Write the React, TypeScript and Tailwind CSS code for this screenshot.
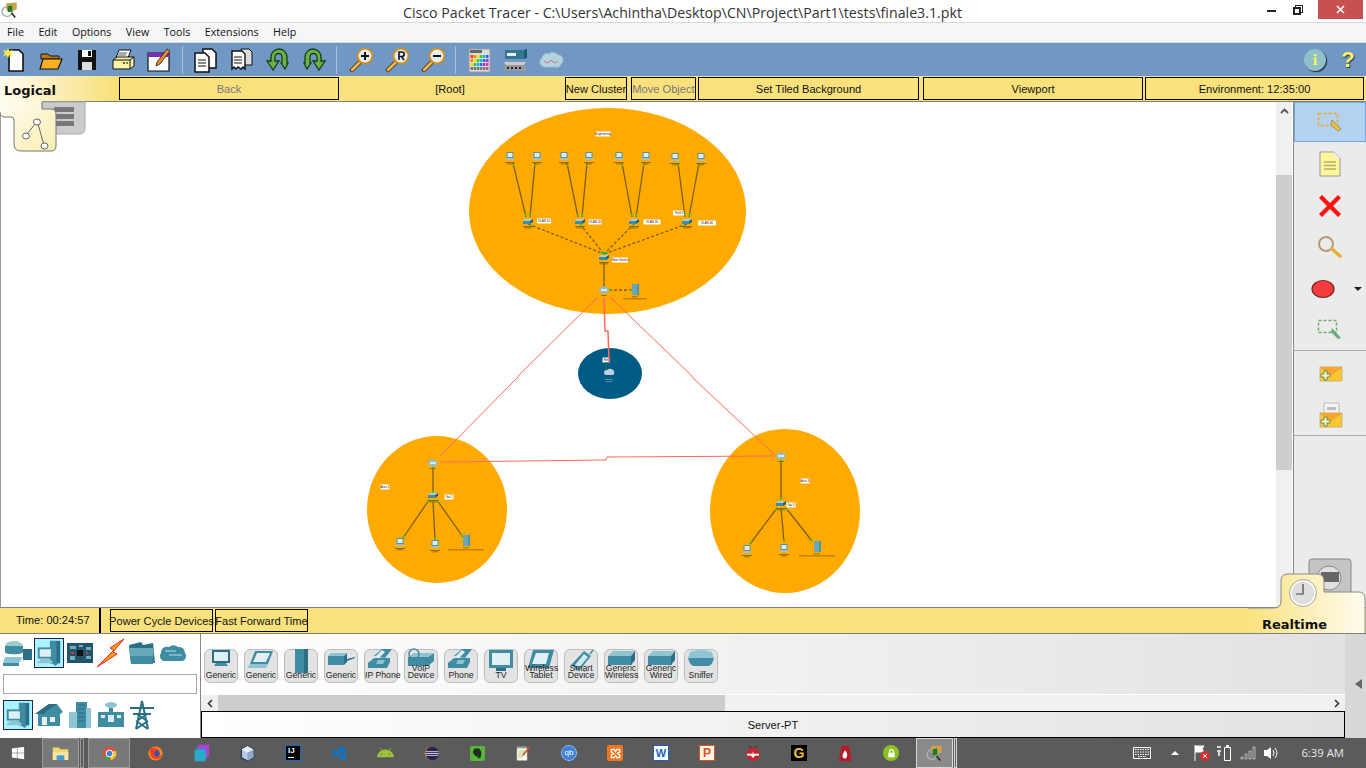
import type { ReactNode } from "react";
import { FaAndroid, FaWindows } from "react-icons/fa";
import { VscVscode } from "react-icons/vsc";

const teal = "#3f8ca3";
const tealDark = "#2a6f85";
const tealLight = "#8fc4d2";

function Ico({ size = 26, children }: { size?: number; children: ReactNode }) {
  return (
    <svg width={size} height={size} viewBox="0 0 26 26">
      {children}
    </svg>
  );
}

const toolbarIcons: ReactNode[] = [
  <Ico key="new">
    <path d="M7 3h10l4 4v17H7z" fill="#fff" stroke="#111" strokeWidth="1.600" />
    <path d="M6 1l1.500 3L11 3 9 6l2 3-3.500-1L6 11 4.500 8 1 9l2-3-2-3 3.500 1z" fill="#ffe94a" />
  </Ico>,
  <Ico key="open">
    <path d="M3 7h7l2 2h9v3H3z" fill="#b97a10" stroke="#111" />
    <path d="M5 12h19l-4 10H2z" fill="#fdb01e" stroke="#111" strokeWidth="1.200" />
  </Ico>,
  <Ico key="save">
    <path d="M4 3h18v20H4z" fill="#111" />
    <path d="M8 3h10v7H8z" fill="#fff" />
    <path d="M8 15h10v8H8z" fill="#ddd" />
    <path d="M14 4h3v5h-3z" fill="#111" />
  </Ico>,
  <Ico key="print">
    <path d="M9 3h12l-3 8H6z" fill="#fff" stroke="#111" />
    <path d="M9 6h8M8 8h8" stroke="#555" />
    <path d="M3 13l4-3h17v9l-4 3H3z" fill="#f8f5a8" stroke="#111" />
    <path d="M3 13h17v9M20 13l4-3" fill="none" stroke="#111" />
    <path d="M13 15h2v2h-2z" fill="#c33" />
    <path d="M16 15h2v2h-2z" fill="#3a3" />
  </Ico>,
  <Ico key="wizard">
    <path d="M2 6h21v18H2z" fill="#fff" stroke="#111" strokeWidth="1.200" />
    <path d="M2 6h21v4H2z" fill="#7a2fb8" />
    <path d="M21 2l3 2-10 13-4 2 1-4z" fill="#e8872b" stroke="#222" strokeWidth=".8" />
  </Ico>,
];

const toolbarIcons2: ReactNode[] = [
  <Ico key="copy">
    <path d="M11 2h9l4 4v15H11z" fill="#fff" stroke="#111" strokeWidth="1.500" />
    <path d="M3 6h10l4 4v15H3z" fill="#fff" stroke="#111" strokeWidth="1.500" />
    <path d="M6 13h8M6 16h8M6 19h8" stroke="#111" />
  </Ico>,
  <Ico key="paste">
    <path d="M13 2h8l3 3v13H13z" fill="#ddd" stroke="#111" />
    <path d="M4 4h10l3 3v15l-2-2-2 2-3-2-2 2-2-2-2 2z" fill="#fff" stroke="#111" strokeWidth="1.400" />
    <path d="M6 10h8M6 13h8M6 16h8" stroke="#111" />
  </Ico>,
  <Ico key="undo">
    <path d="M7 24l-6-9h4V11a8 8 0 0 1 16 0v6h1l-3 6-4-6h1v-6a3.500 3.500 0 0 0-7 0v4h4z" transform="translate(2 -1)" fill="#6fae4b" stroke="#13400f" strokeWidth="1.300" />
  </Ico>,
  <Ico key="redo">
    <path d="M19 24l6-9h-4V11a8 8 0 0 0-16 0v6H4l3 6 4-6h-1v-6a3.500 3.500 0 0 1 7 0v4h-4z" transform="translate(0 -1)" fill="#6fae4b" stroke="#13400f" strokeWidth="1.300" />
  </Ico>,
];

function Magnifier({ glyph }: { glyph: string }) {
  return (
    <Ico>
      <g transform="translate(2 0)">
        <path d="M11 15L3 23" stroke="#4e3a10" strokeWidth="4.500" strokeLinecap="round" />
        <path d="M11 15L3 23" stroke="#f2b84b" strokeWidth="2.500" strokeLinecap="round" />
        <circle cx="16" cy="9" r="7.500" fill="#e7eef2" stroke="#c98f2a" strokeWidth="2" />
        {glyph === "+" && <path d="M12 9h8M16 5v8" stroke="#111" strokeWidth="2" />}
        {glyph === "-" && <path d="M12 9h8" stroke="#111" strokeWidth="2" />}
        {glyph === "R" && <path d="M14 13V5h3a2 2 0 0 1 0 4.500h-3M16.500 9.500L19 13" fill="none" stroke="#111" strokeWidth="1.600" />}
      </g>
    </Ico>
  );
}

const paletteColors = ["#e33", "#f80", "#fd0", "#3c3", "#0bd", "#36e", "#a3c", "#e3a"];

const toolbarIcons3: ReactNode[] = [
  <Ico key="palette">
    <path d="M3 2h21v23H3z" fill="#ddd" stroke="#999" />
    <path d="M4 3h12v3H4z" fill="#666" />
    {[8, 12, 16, 20].map((y, r) =>
      paletteColors.slice(0, 6).map((c, i) => (
        <path key={`${y}-${i}`} d={`M${4.5 + i * 3.1} ${y}h2.500v3h-2.500z`} fill={r === 3 ? "#777" : paletteColors[(i + r) % 8]} />
      )),
    )}
  </Ico>,
  <Ico key="device">
    <path d="M3 3h19v9H3z" fill="#30788f" />
    <path d="M22 3l3-1v9l-3 1z" fill="#1f5a6e" />
    <path d="M5 6h9v3H5z" fill="#e6f2f5" />
    <path d="M2 15h22l-2 3H4z" fill="#ccc" />
    <path d="M2 18h22v6H2z" fill="#999" />
    <path d="M5 20h2v2H5zM9 20h2v2H9zM13 20h2v2h-2zM17 20h2v2h-2z" fill="#222" />
  </Ico>,
  <Ico key="cloud">
    <path d="M6 20a5 5 0 0 1-2-9 5 5 0 0 1 7-4 6 6 0 0 1 9 1 5 5 0 0 1 3 9 5 5 0 0 1-6 3z" fill="#b4d3dc" stroke="#9cc0cb" />
    <path d="M6 14l4 2 3-3 4 3 3-2" fill="none" stroke="#cc6b8a" />
  </Ico>,
];

function ToolbarSep() {
  return <div className="mx-[5px] h-[28px] w-px bg-[#a9c0dc]" />;
}

function ToolSlot({ children }: { children: ReactNode }) {
  return <div className="flex w-[36px] shrink-0 items-center justify-center">{children}</div>;
}

function NavButton({ className, children }: { className: string; children: ReactNode }) {
  return (
    <div className={`flex h-[23px] items-center justify-center whitespace-nowrap border border-black pt-px text-[11.100px] ${className}`}>
      {children}
    </div>
  );
}

// diagram data, in page coordinates
const topPcs = [510, 537, 564, 589, 619, 646, 675, 701];
const topSwitches = [528, 580, 634, 687];
const redLines = [
  { p: "598,297 519,375 517,378 440,456", w: 1 },
  { p: "610,297 691,375 693,378 775,455", w: 1 },
  { p: "604,297 605,331 608,331 609,362", w: 1.5 },
  { p: "441,462 606,460 607,457 775,456", w: 1 },
];

function Pc({ x, y }: { x: number; y: number }) {
  return (
    <g transform={`translate(${x} ${y})`}>
      <path d="M-3.500-5h7v6h-7z" fill="#4f93a8" />
      <path d="M-2.500-4h5v4h-5z" fill="#dfeef2" />
      <path d="M-4 1.500h8l1 1.500h-10z" fill="#9cc5d1" />
      <path d="M-5 5h10v.7h-10zM-3 6.500h6v.7h-6z" fill="#7a5b00" />
    </g>
  );
}

function Sw({ x, y }: { x: number; y: number }) {
  return (
    <g transform={`translate(${x} ${y})`}>
      <path d="M-5-1l2-2h8l-2 2z" fill="#a8cfda" />
      <path d="M-5-1h7v3h-7z" fill="#3f8ca3" />
      <path d="M2-1l3-2v3l-3 2z" fill="#1f6278" />
      <path d="M-5 4h10v.7h-10zM-4 5.500h8v.7h-8z" fill="#7a5b00" />
    </g>
  );
}

function Router({ x, y }: { x: number; y: number }) {
  return (
    <g transform={`translate(${x} ${y})`}>
      <ellipse cx="0" cy="0" rx="5" ry="3.500" fill="#8dbccb" />
      <path d="M-3-1l6 2M3-1l-6 2" stroke="#fff" strokeWidth=".8" />
      <path d="M-3 5h6v.7h-6z" fill="#7a5b00" />
    </g>
  );
}

function Srv({ x, y, w = 14 }: { x: number; y: number; w?: number }) {
  return (
    <g transform={`translate(${x} ${y})`}>
      <path d="M-3-5h7v11h-7z" fill="#4f93a8" />
      <path d="M-3-5h5v11h-5z" fill="#6aa7ba" />
      <path d="M-3 7.500h6v.7h-6z" fill="#7a5b00" />
      <path d={`M${-w}  9.500h${w * 2}v.7h${-w * 2}z`} fill="#7a5b00" />
    </g>
  );
}

function Lbl({ x, y, t, w = 12 }: { x: number; y: number; t: string; w?: number }) {
  return (
    <g>
      <rect x={x - w / 2} y={y - 2.5} width={w} height={5} fill="#fff" />
      <text x={x} y={y + 1} fontSize="3" textAnchor="middle" fill="#411" fontFamily="Liberation Sans, sans-serif">
        {t}
      </text>
    </g>
  );
}

function Link({ a, b, dash }: { a: [number, number]; b: [number, number]; dash?: boolean }) {
  const dx = b[0] - a[0];
  const dy = b[1] - a[1];
  return (
    <g>
      <line x1={a[0]} y1={a[1]} x2={b[0]} y2={b[1]} stroke="#7d5f10" strokeWidth="1.300" strokeDasharray={dash ? "3 2" : undefined} />
      <circle cx={a[0] + dx * 0.04} cy={a[1] + dy * 0.04} r="1" fill="#2ddc2d" />
      <circle cx={b[0] - dx * 0.04} cy={b[1] - dy * 0.04} r="1" fill="#2ddc2d" />
    </g>
  );
}

function Diagram() {
  return (
    <svg className="absolute left-[-1px] top-0" width="1276" height="505" viewBox="0 102 1276 505">
      <ellipse cx="607.500" cy="211" rx="138.500" ry="103" fill="#ffaa00" />
      <ellipse cx="437" cy="509.500" rx="70" ry="73.500" fill="#ffaa00" />
      <ellipse cx="785" cy="511" rx="75" ry="82" fill="#ffaa00" />
      <ellipse cx="610" cy="373.500" rx="32" ry="25.500" fill="#005a86" />

      <Lbl x={603} y={134} t="Engineering" w={15} />
      <Lbl x={544} y={221} t="VLAN 10" w={14} />
      <Lbl x={595} y={222} t="VLAN 20" w={13} />
      <Lbl x={652} y={222} t="VLAN 30" w={17} />
      <Lbl x={679} y={213} t="Fa0/1" w={12} />
      <Lbl x={707} y={223} t="VLAN 40" w={18} />
      <Lbl x={620} y={260} t="Main Switch" w={16} />
      <Lbl x={606} y={360} t="Eth" w={7} />
      <Lbl x={385} y={487} t="Area 2" w={9} />
      <Lbl x={449} y={497} t="Sw 2" w={9} />
      <Lbl x={805} y={481} t="Area 3" w={9} />
      <Lbl x={791} y={505} t="Sw 3" w={9} />

      {topPcs.map((x, i) => (
        <Link key={x} a={[x + (i % 2 === 0 ? 3 : -2), 163]} b={[topSwitches[Math.floor(i / 2)] + (i % 2 === 0 ? -2 : 2), 217]} />
      ))}
      {topSwitches.map((x) => (
        <Link key={x} a={[x, 224]} b={[604, 254]} dash />
      ))}
      <Link a={[604, 262]} b={[604, 288]} />
      <Link a={[609, 290]} b={[632, 290]} dash />
      <Link a={[433, 467]} b={[433, 493]} />
      <Link a={[429, 500]} b={[403, 538]} />
      <Link a={[433, 500]} b={[435, 540]} />
      <Link a={[437, 500]} b={[463, 537]} />
      <Link a={[781, 460]} b={[781, 500]} />
      <Link a={[777, 508]} b={[750, 544]} />
      <Link a={[781, 508]} b={[784, 542]} />
      <Link a={[786, 508]} b={[812, 541]} />

      {redLines.map((l) => (
        <polyline key={l.p} points={l.p} fill="none" stroke="#ff6a5a" strokeWidth={l.w} />
      ))}
      <path d="M606 362v10" stroke="#1f7a3a" />
      <path d="M604 373a3 3 0 0 1 3-3 4 4 0 0 1 6 0 3 3 0 0 1 0 5h-7a2 2 0 0 1-2-2z" fill="#b9d2da" />
      <path d="M605 379h8v.6h-8zM606 381h6v.6h-6z" fill="#9fc0cc" />

      {topPcs.map((x, i) => (
        <Pc key={x} x={x} y={i > 5 ? 158 : 157} />
      ))}
      {topSwitches.map((x) => (
        <Sw key={x} x={x} y={222} />
      ))}
      <Sw x={604} y={258} />
      <Router x={604} y={290} />
      <Srv x={635} y={289} w={12} />
      <Router x={433} y={463} />
      <Sw x={433} y={496} />
      <Pc x={400} y={543} />
      <Pc x={435} y={545} />
      <Srv x={466} y={540} w={18} />
      <Router x={781} y={456} />
      <Sw x={781} y={504} />
      <Pc x={747} y={550} />
      <Pc x={784} y={549} />
      <Srv x={817} y={546} w={18} />
    </svg>
  );
}

const sideTools: { h: string; icon: ReactNode; active?: boolean }[] = [
  {
    h: "h-[40px]",
    active: true,
    icon: (
      <svg width="26" height="24" viewBox="0 0 26 24">
        <rect x="1.500" y="3.500" width="19" height="12" fill="none" stroke="#f5a623" strokeWidth="1.500" strokeDasharray="3 2" />
        <path d="M15 10l9 9-3 2-7-6z" fill="#f0c040" stroke="#8a7a40" strokeWidth=".7" />
      </svg>
    ),
  },
  {
    h: "h-[43px]",
    icon: (
      <svg width="22" height="26" viewBox="0 0 22 26">
        <path d="M1 1h14l6 6v18H1z" fill="#fdf79a" stroke="#999" />
        <path d="M15 1l6 6h-6z" fill="#eee" />
        <path d="M5 11h12M5 14.500h12M5 18h12" stroke="#b5ad6e" strokeWidth="1.400" />
      </svg>
    ),
  },
  {
    h: "h-[41px]",
    icon: (
      <svg width="24" height="24" viewBox="0 0 24 24">
        <path d="M4 1l8 8 8-8 3 3-8 8 8 8-3 3-8-8-8 8-3-3 8-8-8-8z" fill="#f11" />
      </svg>
    ),
  },
  {
    h: "h-[42px]",
    icon: (
      <svg width="26" height="24" viewBox="0 0 26 24">
        <circle cx="9" cy="9" r="7" fill="none" stroke="#b59b74" strokeWidth="2" />
        <path d="M15 14l8 7" stroke="#e3b12f" strokeWidth="3.500" strokeLinecap="round" />
      </svg>
    ),
  },
  {
    h: "h-[41px]",
    icon: (
      <div className="flex w-full items-center">
        <svg className="ml-[17px]" width="24" height="20" viewBox="0 0 24 20">
          <ellipse cx="12" cy="10" rx="11" ry="8.500" fill="#f43c3c" stroke="#7a2020" strokeWidth="1.200" />
        </svg>
        <div className="ml-[19px] h-0 w-0 border-x-[4px] border-t-[4px] border-x-transparent border-t-[#222]" />
      </div>
    ),
  },
  {
    h: "h-[41px]",
    icon: (
      <svg width="26" height="24" viewBox="0 0 26 24">
        <rect x="1.500" y="2.500" width="18" height="12" fill="none" stroke="#71ab6c" strokeWidth="1.500" strokeDasharray="3 2" />
        <path d="M15 10l9 10-3 1-7-7z" fill="#6ea77b" />
      </svg>
    ),
  },
];

function Envelope({ open }: { open?: boolean }) {
  return (
    <svg width="26" height="28" viewBox="0 0 26 28">
      {open && <path d="M6 1h15v14H6z" fill="#f4f4f4" stroke="#bbb" />}
      {open && <path d="M9 5h9v3H9z" fill="#bbb" />}
      <path d="M2 11h22v14H2z" fill="#fec72e" stroke="#c8b080" />
      <path d="M2 11l11 8 11-8" fill="#f8a52b" stroke="#d9a94a" />
      <path d="M3 18h3v-3h3v3h3v3H9v3H6v-3H3z" fill="#e9f5c9" stroke="#5e7a3a" strokeWidth=".8" />
    </svg>
  );
}

function PcGlyph({ s = 30 }: { s?: number }) {
  return (
    <svg width={s} height={s} viewBox="0 0 30 30">
      <path d="M16 2h11v24H16z" fill={tealDark} />
      <path d="M16 2h7v24h-7z" fill={teal} />
      <path d="M3 9h16v12H3z" fill={teal} />
      <path d="M5 11h12v8H5z" fill="#dff1f5" />
      <path d="M7 21h8l6 5H2z" fill={tealLight} />
      <path d="M21 22l4 4-3 3-4-3z" fill={teal} />
    </svg>
  );
}

const categoryIcons: ReactNode[] = [
  <svg key="net" width="30" height="28" viewBox="0 0 30 28">
    <ellipse cx="11" cy="7" rx="9" ry="5" fill="#9cc" />
    <path d="M2 7v6c0 3 18 3 18 0V7" fill={teal} />
    <path d="M20 10h9v11h-9z" fill={tealDark} />
    <path d="M2 18h18l-4 6H0z" fill={tealLight} />
    <path d="M0 24h16v3H0z" fill={teal} />
  </svg>,
  <PcGlyph key="pc" />,
  <svg key="board" width="28" height="22" viewBox="0 0 28 22">
    <path d="M1 1h26v20H1z" fill="#23556a" />
    <path d="M4 4h6v3H4zM13 3h4v2h-4zM20 5h5v3h-5zM4 14h5v4H4zM20 14h5v3h-5z" fill="#6fb0c2" />
    <path d="M11 8h6v6h-6z" fill="#111" />
    <path d="M5 10h3v2H5zM20 10h2v2h-2z" fill="#d33" />
  </svg>,
  <svg key="bolt" width="30" height="30" viewBox="0 0 30 30">
    <path d="M28 1L14 10l4 2L1 29l20-13-4-2z" fill="#f5a010" stroke="#e22" strokeWidth="1" />
  </svg>,
  <svg key="folder" width="28" height="24" viewBox="0 0 28 24">
    <path d="M1 4l12-3 2 3 10-2 2 20H3z" fill={tealDark} />
    <path d="M1 7h25l-1 16H3z" fill={teal} />
    <path d="M1 7h25l-1 8H2z" fill={tealLight} opacity=".5" />
  </svg>,
  <svg key="wan" width="30" height="22" viewBox="0 0 30 22">
    <path d="M6 19a5 5 0 0 1-3-8 6 6 0 0 1 8-6 7 7 0 0 1 9 0 6 6 0 0 1 7 6 5 5 0 0 1-3 8z" fill={teal} />
    <path d="M7 9h11M11 13h13" stroke={tealLight} strokeWidth="1.500" />
  </svg>,
];

const areaIcons: ReactNode[] = [
  <svg key="home" width="30" height="26" viewBox="0 0 30 26">
    <path d="M1 12L15 2h8l6 8-3 2v12H4V12z" fill={teal} />
    <path d="M1 12L15 2h8l-14 10z" fill={tealDark} />
    <path d="M8 15h5v8H8zM16 15h5v5h-5z" fill="#e7f1f4" />
  </svg>,
  <svg key="tower" width="24" height="30" viewBox="0 0 24 30">
    <path d="M8 2h11v26H8z" fill={teal} />
    <path d="M1 12h8v16H1zM18 8h5v20h-5z" fill={tealLight} />
    <path d="M10 5h7M10 9h7M10 13h7M10 17h7M10 21h7" stroke={tealDark} />
  </svg>,
  <svg key="office" width="28" height="28" viewBox="0 0 28 28">
    <ellipse cx="14" cy="4" rx="6" ry="3" fill={tealLight} />
    <path d="M12 7h4v4h-4z" fill={teal} />
    <path d="M1 11h26v15H1z" fill={teal} />
    <path d="M4 14h4v3H4zM11 14h6v7h-6zM20 14h4v3h-4z" fill="#dceef3" />
  </svg>,
  <svg key="pylon" width="28" height="30" viewBox="0 0 28 30">
    <path d="M14 1l-6 28M14 1l6 28M2 8h24M5 14h18M8 21l12 8M20 21L8 29M9 14l10 7M19 14L9 21" fill="none" stroke={tealDark} strokeWidth="2" />
  </svg>,
];

const desktop = (
  <svg width="30" height="24" viewBox="0 0 30 24">
    <path d="M6 2h18v13H6z" fill={tealDark} />
    <path d="M8 4h14v9H8z" fill="#dff1f5" />
    <path d="M10 15h10l2 3H8z" fill={teal} />
  </svg>
);
const laptop = (
  <svg width="30" height="24" viewBox="0 0 30 24">
    <path d="M9 3h18l-5 13H4z" fill={teal} />
    <path d="M11 5h13l-4 9H7z" fill="#dff1f5" />
    <path d="M4 16h18l-2 4H1z" fill={tealLight} />
  </svg>
);
const tower = (
  <svg width="30" height="26" viewBox="0 0 30 26">
    <path d="M9 1h13v24H9z" fill={teal} />
    <path d="M18 1h4v24h-4z" fill={tealDark} />
  </svg>
);
const printer = (
  <svg width="30" height="24" viewBox="0 0 30 24">
    <path d="M2 8l3-3h16l-3 3z" fill={tealLight} />
    <path d="M2 8h16v9H2z" fill={teal} />
    <path d="M18 8l3-3v9l-3 3zM21 11l8-2v1l-8 3z" fill={tealDark} />
  </svg>
);
const phone = (
  <svg width="30" height="24" viewBox="0 0 30 24">
    <path d="M8 8l8-7h10l-7 9z" fill={teal} />
    <path d="M16 2l3 2-8 8-3-2z" fill="#dff1f5" />
    <path d="M2 15l6-5h16v4l-3 6H2z" fill={teal} />
    <path d="M12 12h7l-2 4h-7z" fill={tealLight} />
  </svg>
);
const voip = (
  <svg width="30" height="24" viewBox="0 0 30 24">
    <path d="M2 9h20l6-4v8l-6 5H2z" fill={teal} />
    <path d="M2 9h20l6-4H8z" fill={tealLight} />
    <circle cx="8" cy="6" r="5" fill="none" stroke={teal} strokeWidth="1.500" />
  </svg>
);
const tv = (
  <svg width="30" height="26" viewBox="0 0 30 26">
    <path d="M3 2h24v18H3z" fill={teal} />
    <path d="M6 5h18v12H6z" fill="#dff1f5" />
    <path d="M10 20h10v3H10z" fill={tealDark} />
  </svg>
);
const tablet = (
  <svg width="30" height="24" viewBox="0 0 30 24">
    <path d="M7 2h21l-5 18H2z" fill={teal} />
    <path d="M10 5h13l-3 11H6z" fill="#dff1f5" />
  </svg>
);
const smart = (
  <svg width="30" height="24" viewBox="0 0 30 24">
    <path d="M18 3l7 5-12 15-8-6z" fill={teal} />
    <path d="M18 6l4 3-9 11-4-3z" fill="#cfe6ec" />
    <path d="M24 6l3-4" stroke={teal} strokeWidth="1.400" />
  </svg>
);
const box = (
  <svg width="30" height="22" viewBox="0 0 30 22">
    <path d="M2 8L7 3h22l-4 5z" fill={tealLight} />
    <path d="M2 8h23v9H2z" fill={teal} />
    <path d="M25 8l4-5v9l-4 5z" fill={tealDark} />
  </svg>
);
const sniffer = (
  <svg width="30" height="22" viewBox="0 0 30 22">
    <path d="M4 4q11-4 22 0l2 6H2z" fill={tealLight} />
    <path d="M2 10h26q-2 8-6 8H8q-4 0-6-8z" fill={teal} />
  </svg>
);

const devices: { icon: ReactNode; label: string[] }[] = [
  { icon: desktop, label: ["Generic"] },
  { icon: laptop, label: ["Generic"] },
  { icon: tower, label: ["Generic"] },
  { icon: printer, label: ["Generic"] },
  { icon: phone, label: ["IP Phone"] },
  { icon: voip, label: ["VoIP", "Device"] },
  { icon: phone, label: ["Phone"] },
  { icon: tv, label: ["TV"] },
  { icon: tablet, label: ["Wireless", "Tablet"] },
  { icon: smart, label: ["Smart", "Device"] },
  { icon: box, label: ["Generic", "Wireless"] },
  { icon: box, label: ["Generic", "Wired"] },
  { icon: sniffer, label: ["Sniffer"] },
];

function DeviceTile({ icon, label }: { icon: ReactNode; label: string[] }) {
  return (
    <div className="relative h-[34px] w-[34px] shrink-0 rounded-[6px] border border-[#bdbdbd] bg-[#e3e3e3]">
      <div className="absolute left-[1px] top-[-2px]">{icon}</div>
      <div className="absolute inset-x-0 bottom-[2px] text-center text-[8.700px] leading-[7.500px] text-[#222]">
        {label.map((l) => (
          <div key={l} className="whitespace-nowrap">{l}</div>
        ))}
      </div>
    </div>
  );
}

const taskIcons: ReactNode[] = [
  <svg key="firefox" width="17" height="17" viewBox="0 0 24 24">
    <circle cx="12" cy="12" r="10" fill="#f58a1f" />
    <circle cx="12" cy="12" r="6" fill="#3b4ea0" />
    <path d="M4 6q8-5 14 2-5-2-7 2-3 4 3 6 4 1 7-3-1 7-8 7Q4 20 4 6z" fill="#e7432a" />
  </svg>,
  <svg key="stack" width="17" height="18" viewBox="0 0 24 26">
    <path d="M8 1h15v17H8z" fill="#c23ac9" />
    <path d="M5 4h15v17H5z" fill="#7e5ae0" />
    <path d="M2 8h16v17H2z" fill="#2aa9c9" />
  </svg>,
  <svg key="cube" width="15" height="17" viewBox="0 0 22 24">
    <path d="M11 1l9 5v12l-9 5-9-5V6z" fill="#b9c8dc" stroke="#162a55" strokeWidth="1.500" />
    <path d="M11 1l9 5-9 5-9-5z" fill="#e6edf5" />
    <path d="M11 11v12l9-5V6z" fill="#8fa8c8" />
  </svg>,
  <div key="ij" className="relative h-[16px] w-[16px] border border-[#1b6ac9] bg-black">
    <span className="absolute left-[2px] top-[0px] text-[8px] font-bold leading-[9px] text-white">IJ</span>
    <span className="absolute bottom-[2px] left-[2px] h-px w-[6px] bg-white" />
  </div>,
  <VscVscode key="vscode" size={17} color="#0f74c4" />,
  <FaAndroid key="android" size={17} color="#9dc23c" />,
  <svg key="eclipse" width="15" height="15" viewBox="0 0 24 24">
    <circle cx="12" cy="12" r="11" fill="#f39c1f" />
    <circle cx="13" cy="12" r="11" fill="#2c2255" />
    <path d="M3 9h20M2 12h22M3 15h20" stroke="#fff" strokeWidth="1.200" />
  </svg>,
  <div key="evernote" className="flex h-[15px] w-[15px] items-center justify-center rounded-[2px] bg-[#56b63a]">
    <svg width="10" height="11" viewBox="0 0 16 18">
      <path d="M4 1h8l3 6-1 9-4 1-1-3-4-1-4-6z" fill="#1e2c1d" />
    </svg>
  </div>,
  <svg key="notepad" width="16" height="16" viewBox="0 0 24 24">
    <path d="M3 4h15v19H3z" fill="#fffdf0" stroke="#bbb" />
    <path d="M5 9h10M5 12h10M5 15h10M5 18h7" stroke="#7ab648" />
    <path d="M3 2h15v3H3z" fill="#999" />
    <path d="M22 1l1 2-9 12-3 1 1-3z" fill="#e1442b" />
  </svg>,
  <div key="qb" className="flex h-[16px] w-[16px] items-center justify-center rounded-full border border-[#8fb9ef] bg-[#3d7fd9] text-[8px] text-white">
    qb
  </div>,
  <div key="xampp" className="flex h-[16px] w-[16px] items-center justify-center rounded-[2px] bg-[#f4751f]">
    <svg width="11" height="11" viewBox="0 0 16 16">
      <path d="M2 2h4l2 3 2-3h4v4l-3 2 3 2v4h-4l-2-3-2 3H2v-4l3-2-3-2z" fill="none" stroke="#fff" strokeWidth="2" />
    </svg>
  </div>,
  <div key="word" className="flex h-[16px] w-[16px] items-center justify-center border border-[#1c5fb8] bg-white text-[11px] font-bold leading-none text-[#1c5fb8]">
    W
  </div>,
  <div key="ppt" className="flex h-[16px] w-[16px] items-center justify-center border border-[#d9531e] bg-[#fff3e6] text-[12px] font-bold leading-none text-[#d9531e]">
    P
  </div>,
  <svg key="bug" width="16" height="16" viewBox="0 0 24 24">
    <path d="M6 1l5 5M18 1l-5 5" stroke="#222" strokeWidth="1.500" />
    <circle cx="12" cy="14" r="10" fill="#c9242f" />
    <path d="M3 13h18v3H3z" fill="#eee" />
    <path d="M12 10v8m-3-3l3 4 3-4z" fill="#fff" stroke="#fff" />
  </svg>,
  <div key="g" className="flex h-[16px] w-[16px] items-center justify-center bg-black text-[14px] font-bold leading-none text-[#f2c22e]">
    G
  </div>,
  <svg key="flame" width="14" height="17" viewBox="0 0 22 26">
    <path d="M6 1h12l3 24H1z" fill="#b51d2a" />
    <path d="M11 8q5 6 3 10-1 3-3 3t-4-3q0-4 4-10z" fill="#fff" />
  </svg>,
  <div key="lock" className="flex h-[16px] w-[16px] items-center justify-center rounded-full bg-[#8cc21f]">
    <svg width="9" height="9" viewBox="0 0 14 14">
      <path d="M3 6V4a4 4 0 0 1 8 0v2h1v7H2V6zm2 0h4V4a2 2 0 0 0-4 0z" fill="#fff" />
    </svg>
  </div>,
];

function TaskSlot({ children }: { children: ReactNode }) {
  return <div className="flex h-full w-[46px] shrink-0 items-center justify-center">{children}</div>;
}

function RunningApp({ w, children }: { w: string; children: ReactNode }) {
  return (
    <div className={`flex h-full shrink-0 ${w}`}>
      <div className="flex h-full flex-1 items-center justify-center border border-[#9a9a9a] bg-[#787878]">{children}</div>
    </div>
  );
}

function PtLogo({ s = 24 }: { s?: number }) {
  return (
    <svg width={s} height={s} viewBox="0 0 24 24">
      <circle cx="8" cy="14" r="6.500" fill="none" stroke="#aab0b0" strokeWidth="2" />
      <path d="M7 3l14-1v9l-8 4-6-3z" fill="#c9a24a" />
      <path d="M9 7l6-1v8l-6 1z" fill="#1c7a2a" />
      <path d="M14 16l5 6" stroke="#222" strokeWidth="2" />
    </svg>
  );
}

export default function App() {
  return (
    <div className="flex h-[768px] w-[1366px] flex-col overflow-hidden bg-white font-['Liberation_Sans',sans-serif] text-[#111]">
      {/* title bar */}
      <div className="relative flex h-[22px] shrink-0 items-center justify-center bg-white">
        <div className="absolute left-[1px] top-[1px]">
          <PtLogo s={18} />
        </div>
        <span className="ml-[-1px] mt-[3px] whitespace-nowrap font-['Open_Sans',sans-serif] text-[14.200px] text-[#333]">
          Cisco Packet Tracer - C:\Users\Achintha\Desktop\CN\Project\Part1\tests\finale3.1.pkt
        </span>
        <div className="absolute right-[3px] top-0 flex h-[19px] items-center">
          <div className="mr-[17px] mt-[3px] h-[2px] w-[9px] bg-[#222]" />
          <div className="relative mr-[15px] h-[10px] w-[10px]">
            <div className="absolute right-0 top-0 h-[8px] w-[8px] border border-[#222]" />
            <div className="absolute bottom-0 left-0 h-[8px] w-[8px] border-2 border-[#222] bg-white" />
          </div>
          <div className="flex h-[19px] w-[45px] items-center justify-center bg-[#c75050]">
            <svg width="9" height="9" viewBox="0 0 9 9">
              <path d="M1 1l7 7M8 1L1 8" stroke="#fff" strokeWidth="1.600" />
            </svg>
          </div>
        </div>
      </div>

      {/* menu */}
      <div className="flex h-[21px] shrink-0 items-center gap-[14.500px] border-y border-[#d8d8d8] bg-[#f5f6f8] pl-[7px] font-['Open_Sans',sans-serif] text-[10.700px]">
        {["File", "Edit", "Options", "View", "Tools", "Extensions", "Help"].map((m) => (
          <span key={m}>{m}</span>
        ))}
      </div>

      {/* toolbar */}
      <div className="flex h-[33px] shrink-0 items-center bg-[#7197c5]">
        <div className="ml-[-3px] flex items-center">
          {toolbarIcons.map((ic, i) => (
            <ToolSlot key={i}>{ic}</ToolSlot>
          ))}
        </div>
        <ToolbarSep />
        <div className="ml-[-1px] flex items-center">
          {toolbarIcons2.map((ic, i) => (
            <ToolSlot key={i}>{ic}</ToolSlot>
          ))}
        </div>
        <ToolbarSep />
        <div className="flex items-center">
          {["+", "R", "-"].map((g) => (
            <ToolSlot key={g}>
              <Magnifier glyph={g} />
            </ToolSlot>
          ))}
        </div>
        <ToolbarSep />
        <div className="flex items-center">
          {toolbarIcons3.map((ic, i) => (
            <ToolSlot key={i}>{ic}</ToolSlot>
          ))}
        </div>
        <div className="ml-auto mr-[5px] flex items-center gap-[9px]">
          <div className="flex h-[22px] w-[22px] items-center justify-center rounded-full bg-[#8fc0c8] font-serif text-[16px] font-bold text-[#f8f060] shadow-[1px_1px_1px_#123]">
            i
          </div>
          <span className="w-[26px] text-center text-[22px] font-bold leading-none text-[#fbf36a] [text-shadow:1px_1px_1px_#234]">?</span>
        </div>
      </div>

      {/* nav bar */}
      <div className="flex h-[26px] shrink-0 items-center border-b border-[#808080] bg-[#f9e27e]">
        <div className="flex h-full w-[119px] shrink-0 items-center bg-gradient-to-r from-[#fffdf0] to-[#f7de72] pl-[4px] pt-[5px] font-['DejaVu_Sans',sans-serif] text-[13px] font-bold">
          Logical
        </div>
        <NavButton className="w-[220px] text-[#777]">Back</NavButton>
        <div className="flex w-[226px] shrink-0 items-center justify-center pr-[4px] pt-px text-[11.100px]">[Root]</div>
        <NavButton className="w-[62px]">New Cluster</NavButton>
        <NavButton className="ml-[4px] w-[65px] text-[#777]">Move Object</NavButton>
        <NavButton className="ml-[2px] w-[221px]">Set Tiled Background</NavButton>
        <NavButton className="ml-[4px] w-[220px]">Viewport</NavButton>
        <NavButton className="ml-[2px] w-[219px]">Environment: 12:35:00</NavButton>
      </div>

      {/* workspace */}
      <div className="relative flex min-h-0 flex-1">
        <div className="relative w-[1276px] shrink-0 overflow-hidden border-l border-[#999] bg-white">
          <Diagram />
        </div>
        <div className="flex w-[16px] shrink-0 flex-col bg-[#f0f0f0]">
          <div className="flex h-[17px] items-center justify-center">
            <svg width="9" height="6" viewBox="0 0 9 6">
              <path d="M1 5l3.500-3.500L8 5" fill="none" stroke="#555" strokeWidth="1.800" />
            </svg>
          </div>
          <div className="mt-[56px] h-[295px] bg-[#cdcdcd]" />
        </div>
        <div className="ml-px flex w-[73px] shrink-0 flex-col border-l border-[#888] bg-[#ebebeb]">
          {sideTools.map((t, i) => (
            <div
              key={i}
              className={`flex ${t.h} items-center justify-center ${t.active ? "border border-[#6fa8e8] bg-[#b3d2f0]" : ""}`}
            >
              {t.icon}
            </div>
          ))}
          <div className="flex h-[86px] flex-col items-center gap-[18px] border-y border-[#aaa] pl-[2px] pt-[5px]">
            <Envelope />
            <Envelope open />
          </div>
        </div>

        {/* logical tab */}
        <div className="absolute left-0 top-[-1px]">
          <svg width="90" height="52" viewBox="0 0 90 52">
            <defs>
              <linearGradient id="lg" x1="0" x2="1" y1="0" y2="1">
                <stop offset="0" stopColor="#fffef5" />
                <stop offset="1" stopColor="#fbedb0" />
              </linearGradient>
            </defs>
            <path d="M42 1h43v26q0 6-6 6H42z" fill="#cbcbcb" stroke="#aaa" />
            <path d="M54 6h20v5H54zM54 13h20v5H54zM54 20h20v5H54z" fill="#777" />
            <path d="M0 0h42v8h9q5 0 5 6v31q0 5-5 5H21q-7 0-7-7V19q0-3-3-3H5q-5 0-5-5z" fill="url(#lg)" />
            <path d="M42 1v7h9q5 0 5 6v31q0 5-5 5H21q-7 0-7-7V19q0-3-3-3H5q-5 0-5-5" fill="none" stroke="#777" />
            <g fill="#fff" stroke="#666">
              <path d="M36 22L26 34M38 23l6 21" fill="none" />
              <ellipse cx="37" cy="21" rx="3.500" ry="3" />
              <ellipse cx="26" cy="35" rx="3.500" ry="3" />
              <ellipse cx="44.500" cy="45" rx="3.500" ry="3" />
            </g>
          </svg>
        </div>
        <div className="absolute bottom-[-1px] right-0 h-[50px] w-[85px]">
          <svg className="absolute right-[14px] top-0" width="44" height="46" viewBox="0 0 44 46">
            <path d="M4 1h36q3 0 3 3v40H1V4q0-3 3-3z" fill="#c4c4c4" stroke="#888" />
            <circle cx="21" cy="20" r="12" fill="#e0e0e0" stroke="#888" />
            <path d="M13 14h18v10H13z" fill="#666" />
          </svg>
        </div>
      </div>

      {/* time bar */}
      <div className="relative flex h-[26px] shrink-0 items-center border-t border-[#808080] bg-[#f9e27e]">
        <span className="ml-[16px] w-[83px] text-[11.100px]">Time: 00:24:57</span>
        <div className="h-full w-[2px] bg-black" />
        <NavButton className="ml-[9px] w-[103px]">Power Cycle Devices</NavButton>
        <NavButton className="ml-[2px] w-[93px]">Fast Forward Time</NavButton>
        <div className="absolute bottom-0 right-0 h-[60px] w-[118px]">
          <svg className="absolute bottom-0 right-0" width="118" height="60" viewBox="0 0 118 60">
            <defs>
              <linearGradient id="rt" x1="0" x2="1" y1="0" y2="0">
                <stop offset="0" stopColor="#f9e27e" />
                <stop offset="1" stopColor="#fffdf0" />
              </linearGradient>
            </defs>
            <path d="M0 60V35h26q7 0 7-7V8q0-7 7-7h29q7 0 7 7v11h35q6 0 6 7v34z" fill="url(#rt)" />
            <path d="M0 35h26q7 0 7-7V8q0-7 7-7h29q7 0 7 7v11h35q6 0 6 7v34" fill="none" stroke="#8a8a8a" />
            <circle cx="55" cy="20" r="12" fill="#dedede" stroke="#fff" strokeWidth="1.500" />
            <circle cx="55" cy="20" r="13.500" fill="none" stroke="#aaa" />
            <path d="M55 11v10h-7" fill="none" stroke="#444" strokeWidth="1.200" />
          </svg>
          <span className="absolute bottom-[1px] left-[14px] font-['DejaVu_Sans',sans-serif] text-[13px] font-bold leading-[14px]">Realtime</span>
        </div>
      </div>

      {/* bottom panel */}
      <div className="flex h-[105px] shrink-0 border-t border-[#808080]">
        <div className="flex w-[200px] shrink-0 flex-col bg-white">
          <div className="flex h-[34px] items-center pl-[3px] pt-[3px]">
            {categoryIcons.map((ic, i) => (
              <div
                key={i}
                className={`mr-px flex h-[30px] w-[30px] items-center justify-center ${i === 1 ? "border border-[#225] bg-[#a8f5ff]" : ""}`}
              >
                {ic}
              </div>
            ))}
          </div>
          <div className="mx-[3px] mt-[6px] h-[20px] border border-[#aaa] bg-white" />
          <div className="ml-[3px] mt-[6px] flex items-center">
            <div className="flex h-[30px] w-[30px] items-center justify-center border border-[#225] bg-[#a8f5ff]">
              <PcGlyph s={28} />
            </div>
            {areaIcons.map((ic, i) => (
              <div key={i} className="ml-px flex h-[30px] w-[30px] items-center justify-center">
                {ic}
              </div>
            ))}
          </div>
        </div>
        <div className="flex min-w-0 flex-1 flex-col border-l border-[#888]">
          <div className="flex h-[60px] items-center gap-[6px] bg-gradient-to-r from-white to-[#e2e2e2] pl-[3px] pt-[3px]">
            {devices.map((d, i) => (
              <DeviceTile key={i} icon={d.icon} label={d.label} />
            ))}
          </div>
          <div className="flex h-[17px] items-center border-t border-white bg-[#f0f0f0]">
            <div className="flex w-[17px] items-center justify-center">
              <svg width="6" height="9" viewBox="0 0 6 9">
                <path d="M5 1L1.500 4.500 5 8" fill="none" stroke="#333" strokeWidth="1.600" />
              </svg>
            </div>
            <div className="h-full w-[507px] bg-[#cdcdcd]" />
            <div className="ml-auto mr-[3px] flex w-[10px] items-center justify-center">
              <svg width="6" height="9" viewBox="0 0 6 9">
                <path d="M1 1l3.500 3.500L1 8" fill="none" stroke="#333" strokeWidth="1.600" />
              </svg>
            </div>
          </div>
          <div className="flex h-[27px] items-center justify-center border border-b border-black bg-gradient-to-r from-white to-[#e2e2e2] pt-[2px] text-[11.100px]">
            Server-PT
          </div>
        </div>
        <div className="flex w-[21px] shrink-0 items-center justify-center bg-[#d8d8d8]">
          <div className="ml-[6px] mb-[4px] h-0 w-0 border-y-[5px] border-r-[7px] border-y-transparent border-r-[#666]" />
        </div>
      </div>

      {/* taskbar */}
      <div className="flex h-[30px] shrink-0 items-center bg-[#5b5b5b] text-white">
        <div className="flex h-full w-[42px] shrink-0 items-center justify-center pr-[6px]">
          <FaWindows size={14} />
        </div>
        <RunningApp w="w-[37px]">
          <svg width="17" height="16" viewBox="0 0 22 20">
            <path d="M1 3h8l2 2h10v14H1z" fill="#f2d26a" />
            <path d="M1 9h20v10H1z" fill="#f8e6a2" />
            <path d="M6 13h10v6H6z" fill="#3c9ad6" />
          </svg>
        </RunningApp>
        <div className="ml-px h-full w-[4px] border border-[#9a9a9a]" />
        <div className="ml-[4px] h-full">
          <RunningApp w="w-[42px]">
            <svg width="15" height="15" viewBox="0 0 20 20">
              <circle cx="10" cy="10" r="9" fill="#e24c3c" />
              <path d="M10 10L2 15a9 9 0 0 0 8 4z" fill="#3fa64a" />
              <path d="M10 10l8-4a9 9 0 0 1-6 13z" fill="#f7c52e" />
              <circle cx="10" cy="10" r="4.500" fill="#3d80d8" stroke="#fff" strokeWidth="1.300" />
            </svg>
          </RunningApp>
        </div>
        <div className="ml-[2px] flex h-full">
          {taskIcons.map((ic, i) => (
            <TaskSlot key={i}>{ic}</TaskSlot>
          ))}
        </div>
        <div className="ml-[2px] flex h-full w-[37px] shrink-0">
          <div className="flex flex-1 items-center justify-center border border-[#d8d8d8] bg-[#8a8a8a]">
            <PtLogo s={18} />
          </div>
        </div>
        <div className="ml-px h-full w-[3px] border border-[#d8d8d8]" />
        <div className="flex-1" />
        <div className="flex h-full items-center">
          <svg width="18" height="12" viewBox="0 0 18 12" className="mr-[20px]">
            <path d="M.5.500h17v11H.5z" fill="none" stroke="#fff" />
            <path d="M2 2.500h14M2 5h14M2 7.500h14M5 9.500h8" stroke="#fff" strokeDasharray="1.500 1" />
          </svg>
          <div className="mr-[14px] h-0 w-0 border-x-[4px] border-b-[4px] border-x-transparent border-b-white" />
          <svg width="18" height="18" viewBox="0 0 18 18" className="mr-[5px]">
            <path d="M2 1v16M2 2h9l-2 3 2 3H2" fill="#fff" stroke="#fff" />
            <circle cx="12" cy="12" r="5" fill="#d52d2d" />
            <path d="M10 10l4 4M14 10l-4 4" stroke="#fff" />
          </svg>
          <svg width="16" height="18" viewBox="0 0 16 18" className="mr-[8px]">
            <path d="M1 3h4M1 7h4M3 8v4" stroke="#fff" strokeWidth="1.500" />
            <path d="M8.500 3.500h6v13h-6z" fill="none" stroke="#fff" />
            <path d="M10 1h3v2h-3z" fill="#fff" />
          </svg>
          <svg width="16" height="14" viewBox="0 0 16 14" className="mr-[7px]">
            <path d="M1 11h2v2H1zM5 8h2v5H5zM9 5h2v8H9zM13 1h2v12h-2z" fill="none" stroke="#ddd" strokeWidth=".7" />
          </svg>
          <svg width="16" height="14" viewBox="0 0 16 14" className="mr-[22px]">
            <path d="M1 4h3l4-3v12l-4-3H1z" fill="#fff" />
            <path d="M10 4q2 3 0 6M12 2q4 5 0 10" fill="none" stroke="#fff" />
          </svg>
          <span className="mr-[22px] font-['Open_Sans',sans-serif] text-[11.300px] text-[#e8e8e8]">6:39 AM</span>
        </div>
      </div>
    </div>
  );
}
